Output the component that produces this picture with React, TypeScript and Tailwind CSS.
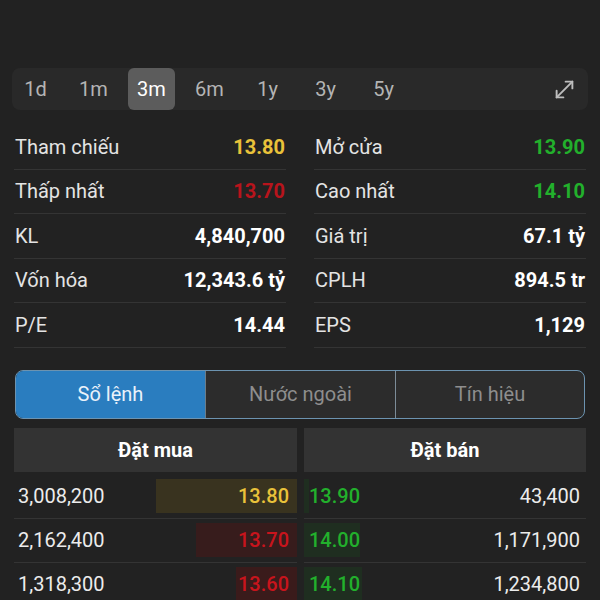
import React from 'react';
import { MoveDiagonal } from 'lucide-react';

const periods = ['1d', '1m', '3m', '6m', '1y', '3y', '5y'];

interface Stat {
  label: string;
  value: string;
  color: string;
}

const leftStats: Stat[] = [
  { label: 'Tham chiếu', value: '13.80', color: 'text-[#e9c23a]' },
  { label: 'Thấp nhất', value: '13.70', color: 'text-[#b8141c]' },
  { label: 'KL', value: '4,840,700', color: 'text-white' },
  { label: 'Vốn hóa', value: '12,343.6 tỷ', color: 'text-white' },
  { label: 'P/E', value: '14.44', color: 'text-white' },
];

const rightStats: Stat[] = [
  { label: 'Mở cửa', value: '13.90', color: 'text-[#22b02c]' },
  { label: 'Cao nhất', value: '14.10', color: 'text-[#22b02c]' },
  { label: 'Giá trị', value: '67.1 tỷ', color: 'text-white' },
  { label: 'CPLH', value: '894.5 tr', color: 'text-white' },
  { label: 'EPS', value: '1,129', color: 'text-white' },
];

const bids = [
  { vol: '3,008,200', price: '13.80', bar: 'w-[141px] bg-[#39331f]', color: 'text-[#e9c23a]' },
  { vol: '2,162,400', price: '13.70', bar: 'w-[101px] bg-[#371c1c]', color: 'text-[#c8141c]' },
  { vol: '1,318,300', price: '13.60', bar: 'w-[61px] bg-[#3a1b1b]', color: 'text-[#c8141c]' },
];

const asks = [
  { vol: '43,400', price: '13.90', bar: 'w-[5px] bg-[#1f2e20]' },
  { vol: '1,171,900', price: '14.00', bar: 'w-[56px] bg-[#1f2e20]' },
  { vol: '1,234,800', price: '14.10', bar: 'w-[58px] bg-[#1f2e20]' },
];

const StatColumn: React.FC<{ items: Stat[] }> = ({ items }) => (
  <div className="flex flex-col">
    {items.map((s) => (
      <div
        key={s.label}
        className="h-[44.5px] flex items-center justify-between border-b border-[#343434] pl-[1px] pr-[1px]"
      >
        <span className="text-[#e4e4e4]">{s.label}</span>
        <span className={`font-bold ${s.color}`}>{s.value}</span>
      </div>
    ))}
  </div>
);

export default function App() {
  return (
    <div
      className="w-[600px] h-[600px] overflow-hidden bg-[#222222] text-[20px] pt-[68px]"
      style={{ fontFamily: 'Roboto, "Noto Sans", sans-serif' }}
    >
      {/* period selector */}
      <div className="mx-[12px] h-[42px] rounded-lg bg-[#292929] flex items-center">
        <div className="flex gap-[11px] h-full">
          {periods.map((p) => (
            <div
              key={p}
              className={`w-[47px] h-full flex items-center justify-center rounded-md ${
                p === '3m' ? 'bg-[#5c5c5c] text-white' : 'text-[#b4b4b4]'
              }`}
            >
              {p}
            </div>
          ))}
        </div>
        <div className="ml-auto mr-[10px] text-[#bdbdbd]">
          <MoveDiagonal size={27} strokeWidth={1.7} />
        </div>
      </div>

      {/* stats */}
      <div className="mt-[15px] px-[14px] grid grid-cols-2 gap-x-[28px]">
        <StatColumn items={leftStats} />
        <StatColumn items={rightStats} />
      </div>

      {/* tabs */}
      <div className="mt-[22px] mx-[15px] h-[49px] rounded-lg border-[1.5px] border-[#6c93b0] flex overflow-hidden bg-[#2c2c2c]">
        <div className="w-[189px] flex items-center justify-center bg-[#2a7dbf] text-[#eaf2fa]">Sổ lệnh</div>
        <div className="w-[190px] flex items-center justify-center border-l border-[#6c7c88] text-[#8e8e8e]">
          Nước ngoài
        </div>
        <div className="flex-1 flex items-center justify-center border-l border-[#7c8c98] text-[#8e8e8e]">
          Tín hiệu
        </div>
      </div>

      {/* order book */}
      <div className="mt-[9px] px-[14px] grid grid-cols-[283px_282px] gap-x-[7px]">
        <div className="flex flex-col">
          <div className="h-[44px] mb-[3px] bg-[#333333] flex items-center justify-center font-bold text-white">Đặt mua</div>
          {bids.map((b) => (
            <div key={b.price} className="h-[44px] flex items-center justify-between border-b border-[#343434]">
              <span className="pl-[4px] text-[#ececec]">{b.vol}</span>
              <span className={`h-[34px] flex items-center justify-end pr-[8px] font-medium ${b.bar} ${b.color}`}>
                {b.price}
              </span>
            </div>
          ))}
        </div>
        <div className="flex flex-col">
          <div className="h-[44px] mb-[3px] bg-[#333333] flex items-center justify-center font-bold text-white">Đặt bán</div>
          {asks.map((a) => (
            <div key={a.price} className="h-[44px] flex items-center justify-between border-b border-[#343434]">
              <div className="relative h-[34px] flex items-center">
                <div className={`absolute left-0 top-0 h-full ${a.bar}`} />
                <span className="relative pl-[5px] font-medium text-[#22b02c]">{a.price}</span>
              </div>
              <span className="pr-[6px] text-[#ececec]">{a.vol}</span>
            </div>
          ))}
        </div>
      </div>
    </div>
  );
}
